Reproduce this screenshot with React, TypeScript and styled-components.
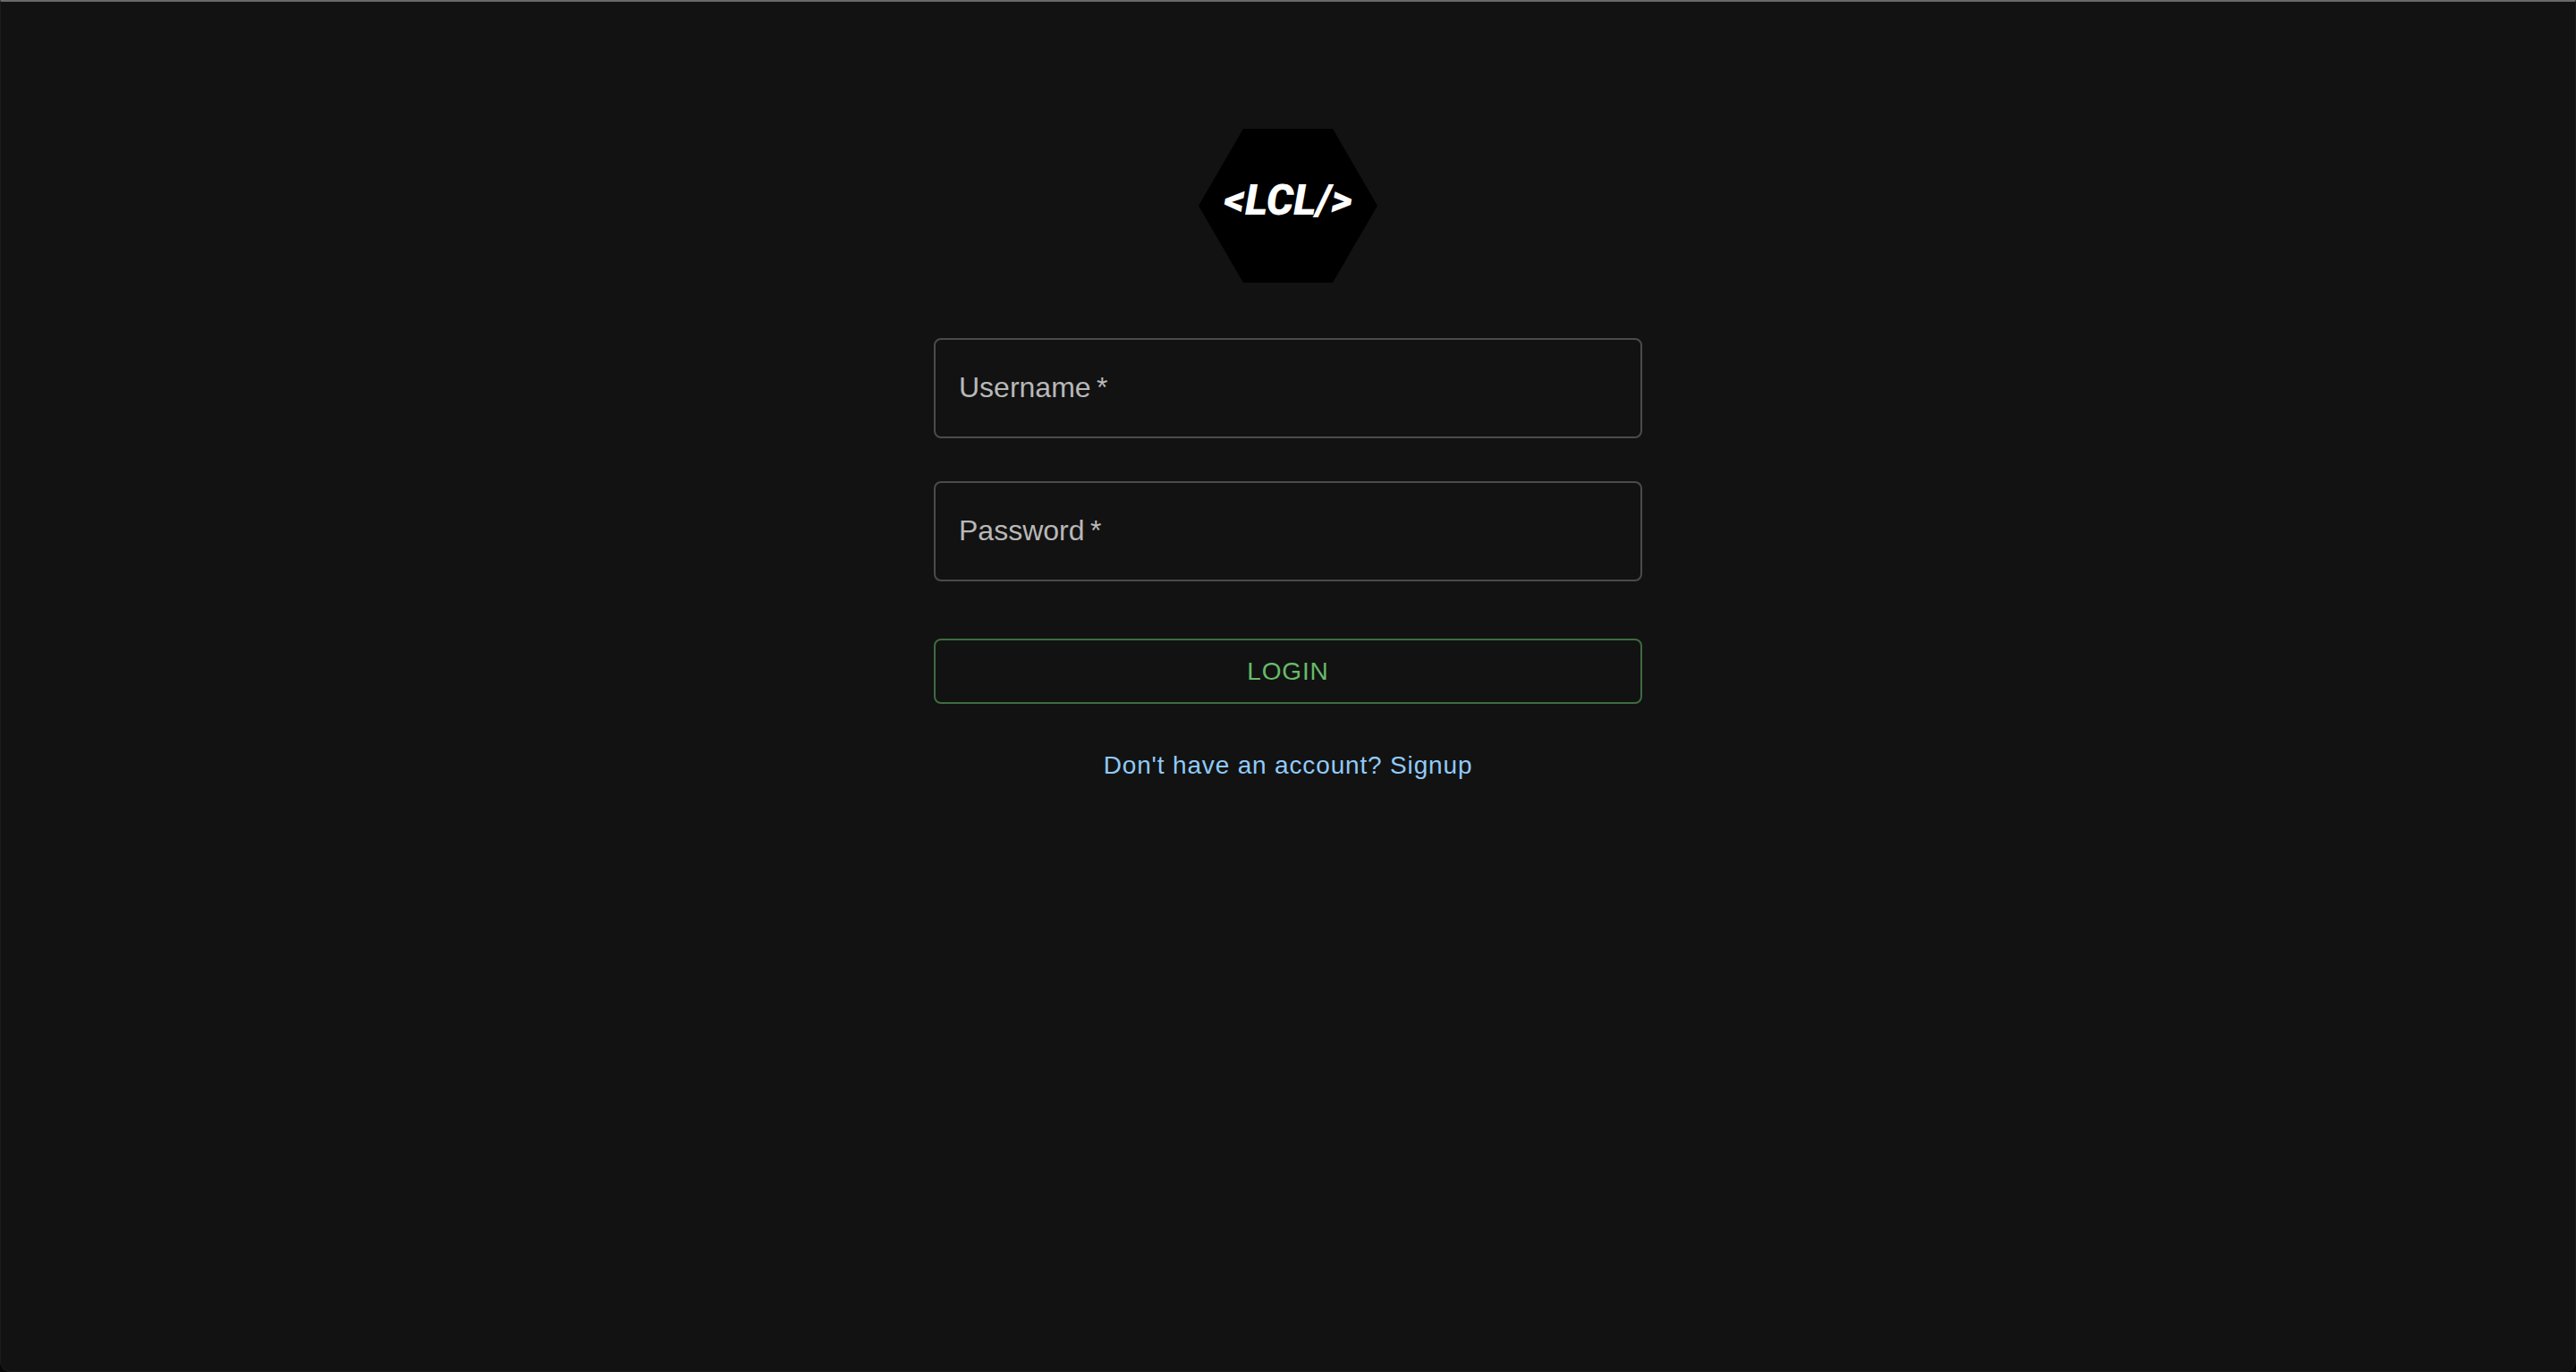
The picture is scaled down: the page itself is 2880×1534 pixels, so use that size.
import React, { useState } from 'react';
import styled, { createGlobalStyle } from 'styled-components';

const GlobalStyle = createGlobalStyle`
  *, *::before, *::after { box-sizing: border-box; }
  html { background: #060809; }
  body {
    margin: 0;
    font-family: "Liberation Sans", Helvetica, Arial, sans-serif;
    color: #fff;
  }
`;

const Page = styled.main`
  min-height: 100vh;
  display: flex;
  flex-direction: column;
  align-items: center;
  padding: 142px 48px 48px;
  background: #121212;
  border: 1px solid #1c1c1c;
  border-top: 2px solid #696969;
  border-radius: 0 0 12px 12px;
`;

const Logo = styled.div`
  width: 200px;
  height: 172px;
  display: flex;
  justify-content: center;
  padding-top: 52px;
  background: #000;
  clip-path: polygon(25% 0, 75% 0, 100% 50%, 75% 100%, 25% 100%, 0 50%);
`;

const LogoText = styled.span`
  font: italic 900 48px/56px Roboto, sans-serif;
`;

const Form = styled.form`
  width: 100%;
  max-width: 792px;
  display: flex;
  flex-direction: column;
  align-items: stretch;
  margin-top: 62px;
`;

const Field = styled.div`
  position: relative;
  height: 112px;
  margin-bottom: 48px;
`;

const Label = styled.label`
  position: absolute;
  left: 28px;
  top: 36px;
  font-size: 32px;
  line-height: 38px;
  color: #b8b8b8;
  pointer-events: none;
`;

const Input = styled.input`
  width: 100%;
  height: 100%;
  padding: 0 28px;
  font: inherit;
  font-size: 32px;
  color: #fff;
  background: transparent;
  border: 2px solid #4b4b4b;
  border-radius: 8px;
  outline: none;

  &:focus { border-color: #90caf9; }
`;

const LoginButton = styled.button`
  height: 73px;
  margin-top: 16px;
  font: inherit;
  font-size: 28px;
  line-height: 48px;
  letter-spacing: 0.03em;
  text-transform: uppercase;
  color: #66bb6a;
  background: transparent;
  border: 2px solid #3e6b40;
  border-radius: 8px;
  cursor: pointer;
`;

const SignupLink = styled.a`
  align-self: center;
  margin-top: 45px;
  font-size: 28px;
  line-height: 48px;
  letter-spacing: 0.03em;
  color: #90caf9;
  text-decoration: none;
`;

type TextFieldProps = { id: string; label: string; type: string };

function TextField({ id, label, type }: TextFieldProps) {
  const [value, setValue] = useState('');
  return (
    <Field>
      <Input id={id} type={type} required value={value} onChange={(e) => setValue(e.target.value)} />
      {value === '' && <Label htmlFor={id}>{label}&#8201;*</Label>}
    </Field>
  );
}

export default function App() {
  return (
    <>
      <GlobalStyle />
      <Page>
        <Logo>
          <LogoText>{'<LCL/>'}</LogoText>
        </Logo>
        <Form onSubmit={(e) => e.preventDefault()}>
          <TextField id="username" label="Username" type="text" />
          <TextField id="password" label="Password" type="password" />
          <LoginButton type="submit">Login</LoginButton>
          <SignupLink href="#signup">Don't have an account? Signup</SignupLink>
        </Form>
      </Page>
    </>
  );
}
